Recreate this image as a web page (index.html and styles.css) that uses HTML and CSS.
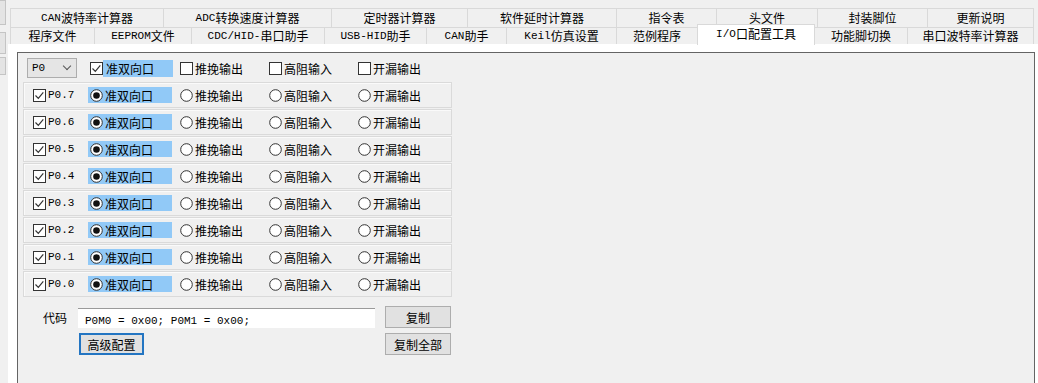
FILE: index.html
```html
<!DOCTYPE html>
<html lang="zh-CN">
<head>
    <meta charset="UTF-8">
    <title>I/O口配置工具</title>
    <link rel="stylesheet" href="styles.css">
</head>
<body>
    <div class="app">
        <div class="side">
            <div class="stub s1"></div>
            <div class="stub s2"></div>
            <div class="stub s3"></div>
        </div>

        <div class="main">
            <div class="tabs">
                <div class="tab-row row1">
                    <div class="tab"><span class="lat">CAN</span>波特率计算器</div>
                    <div class="tab"><span class="lat">ADC</span>转换速度计算器</div>
                    <div class="tab">定时器计算器</div>
                    <div class="tab">软件延时计算器</div>
                    <div class="tab">指令表</div>
                    <div class="tab">头文件</div>
                    <div class="tab">封装脚位</div>
                    <div class="tab">更新说明</div>
                </div>
                <div class="tab-row row2">
                    <div class="tab">程序文件</div>
                    <div class="tab"><span class="lat">EEPROM</span>文件</div>
                    <div class="tab"><span class="lat">CDC/HID-</span>串口助手</div>
                    <div class="tab"><span class="lat">USB-HID</span>助手</div>
                    <div class="tab"><span class="lat">CAN</span>助手</div>
                    <div class="tab"><span class="lat">Keil</span>仿真设置</div>
                    <div class="tab">范例程序</div>
                    <div class="tab active"><span class="lat">I/O</span>口配置工具</div>
                    <div class="tab">功能脚切换</div>
                    <div class="tab">串口波特率计算器</div>
                </div>
            </div>

            <div class="page">
                <div class="panel">
                    <div class="head-row">
                        <div class="combo"><span class="lat">P0</span><span class="chev"></span></div>
                        <div class="opt first">
                            <svg class="box" width="13" height="13"><rect x="0.5" y="0.5" width="12" height="12" fill="#fff" stroke="#333"/><path d="M2.5 6.5l2.8 2.8 5-6" fill="none" stroke="#333" stroke-width="1.2"/></svg>
                            <span class="hl">准双向口</span>
                        </div>
                        <div class="opt"><svg class="box" width="13" height="13"><rect x="0.5" y="0.5" width="12" height="12" fill="#fff" stroke="#333"/></svg>推挽输出</div>
                        <div class="opt"><svg class="box" width="13" height="13"><rect x="0.5" y="0.5" width="12" height="12" fill="#fff" stroke="#333"/></svg>高阻输入</div>
                        <div class="opt"><svg class="box" width="13" height="13"><rect x="0.5" y="0.5" width="12" height="12" fill="#fff" stroke="#333"/></svg>开漏输出</div>
                    </div>

                    <div class="pins" id="pins"></div>

                    <div class="code-row">
                        <span class="code-label">代码</span>
                        <div class="code-box"><span class="lat">P0M0 = 0x00; P0M1 = 0x00;</span></div>
                        <button class="btn">复制</button>
                    </div>
                    <div class="btn-row">
                        <button class="btn default">高级配置</button>
                        <button class="btn right">复制全部</button>
                    </div>
                </div>
            </div>
        </div>
    </div>

    <script>
        const boxOn = '<svg width="13" height="13"><rect x="0.5" y="0.5" width="12" height="12" fill="#fff" stroke="#333"/><path d="M2.5 6.5l2.8 2.8 5-6" fill="none" stroke="#333" stroke-width="1.2"/></svg>';
        const radioOn = '<svg width="13" height="13"><circle cx="6.5" cy="6.5" r="5.8" fill="#fff" stroke="#333"/><circle cx="6.5" cy="6.5" r="3.3" fill="#111"/></svg>';
        const radioOff = '<svg width="13" height="13"><circle cx="6.5" cy="6.5" r="5.8" fill="#fff" stroke="#333"/></svg>';

        const pins = document.getElementById('pins');
        for (let i = 7; i >= 0; i--) {
            const row = document.createElement('div');
            row.className = 'pin-row';
            row.innerHTML = `
                <div class="pin-name">${boxOn}<span class="lat">P0.${i}</span></div>
                <div class="opt sel">${radioOn}<span>准双向口</span></div>
                <div class="opt">${radioOff}推挽输出</div>
                <div class="opt">${radioOff}高阻输入</div>
                <div class="opt">${radioOff}开漏输出</div>
            `;
            pins.appendChild(row);
        }
    </script>
</body>
</html>
```

FILE: styles.css
```css
* {
    margin: 0;
    padding: 0;
    box-sizing: border-box;
}

body {
    width: 1038px;
    height: 383px;
    overflow: hidden;
    background: #f0f0f0;
    font-family: "Noto Sans CJK SC", sans-serif;
    font-size: 12px;
    color: #000;
}

.lat {
    font-family: "Liberation Mono", monospace;
    font-size: 11px;
}

.app {
    display: flex;
    height: 383px;
}

/* left edge of a neighbouring window */
.side {
    width: 8px;
    display: flex;
    flex-direction: column;
}

.stub {
    width: 8px;
    margin-left: -2px;
    background: #e4e4e4;
    border: 1px solid #c4c4c4;
}

.s1 { height: 25px; }
.s2 { height: 22px; margin-top: 7px; }
.s3 { height: 18px; margin-top: 3px; }

.main {
    flex: 1;
    display: flex;
    flex-direction: column;
}

/* tabs */
.tabs {
    padding-top: 8px;
    margin-left: 2px;
    width: 1026px;
}

.tab-row {
    display: flex;
}

.tab {
    display: flex;
    align-items: center;
    justify-content: center;
    background: #f0f0f0;
    border-top: 1px solid #d9d9d9;
    border-right: 1px solid #d9d9d9;
    white-space: nowrap;
    line-height: 1;
}

.tab:first-child {
    border-left: 1px solid #d9d9d9;
}

.row1 .tab { height: 19px; }
.row2 .tab { height: 17px; }

.row1 .tab:nth-child(1) { width: 154px; }
.row1 .tab:nth-child(2) { width: 168px; }
.row1 .tab:nth-child(3) { width: 136px; }
.row1 .tab:nth-child(4) { width: 149px; }
.row1 .tab:nth-child(5) { width: 100px; }
.row1 .tab:nth-child(6) { width: 101px; }
.row1 .tab:nth-child(7) { width: 110px; }
.row1 .tab:nth-child(8) { width: 106px; }

.row2 .tab:nth-child(1) { width: 85px; }
.row2 .tab:nth-child(2) { width: 97px; }
.row2 .tab:nth-child(3) { width: 133px; }
.row2 .tab:nth-child(4) { width: 102px; }
.row2 .tab:nth-child(5) { width: 80px; }
.row2 .tab:nth-child(6) { width: 110px; }
.row2 .tab:nth-child(7) { width: 81px; }
.row2 .tab:nth-child(8) { width: 117px; }
.row2 .tab:nth-child(9) { width: 93px; }
.row2 .tab:nth-child(10) { width: 126px; }

.row2 .tab.active {
    height: 21px;
    margin-top: -3px;
    margin-bottom: -1px;
    background: #fff;
    border-left: 1px solid #d9d9d9;
    margin-left: -1px;
    width: 118px;
    position: relative;
    z-index: 1;
    padding-bottom: 2px;
}

/* page */
.page {
    flex: 1;
    background: #fff;
    padding: 8px 3px 0 9px;
    display: flex;
}

.panel {
    flex: 1;
    background: #f0f0f0;
    border: 1px solid #646464;
    border-bottom: none;
    padding: 5px 0 0 5px;
}

.head-row {
    display: flex;
    align-items: center;
    height: 20px;
    margin-left: 4px;
}

.combo {
    width: 50px;
    height: 20px;
    background: #e5e5e5;
    border: 1px solid #adadad;
    display: flex;
    align-items: center;
    justify-content: space-between;
    padding: 0 6px 0 4px;
}

.chev {
    width: 6px;
    height: 6px;
    border-right: 1px solid #555;
    border-bottom: 1px solid #555;
    transform: rotate(45deg);
    margin-top: -4px;
}

.opt {
    display: flex;
    align-items: center;
    gap: 2px;
    width: 89px;
    white-space: nowrap;
}

.head-row .opt.first {
    width: 90px;
    margin-left: 13px;
    gap: 0;
}

.head-row .opt.first .hl {
    background: #91c9f7;
    width: 70px;
    height: 17px;
    display: flex;
    align-items: center;
    padding-left: 3px;
}

/* pin rows */
.pins {
    margin-top: 4px;
    display: flex;
    flex-direction: column;
    gap: 1px;
}

.pin-row {
    width: 429px;
    height: 26px;
    border: 1px solid #dadada;
    box-shadow: inset 1px 1px 0 #fafafa;
    display: flex;
    align-items: center;
    padding-left: 9px;
}

.pin-name {
    width: 55px;
    display: flex;
    align-items: center;
    gap: 2px;
}

.pin-row .opt.sel {
    width: 84px;
    height: 16px;
    background: #91c9f7;
    padding-left: 2px;
    margin-right: 8px;
}

.opt svg {
    flex-shrink: 0;
}

/* code area */
.code-row {
    display: flex;
    align-items: flex-end;
    margin-top: 9px;
    height: 22px;
}

.code-label {
    margin-left: 20px;
    width: 35px;
    height: 20px;
    line-height: 20px;
}

.code-box {
    width: 297px;
    height: 20px;
    background: #fff;
    border-top: 1px solid #9a9a9a;
    padding-left: 7px;
    line-height: 19px;
}

.btn {
    width: 66px;
    height: 22px;
    margin-left: 10px;
    background: #e1e1e1;
    border: 1px solid #adadad;
    font-family: "Noto Sans CJK SC", sans-serif;
    font-size: 12px;
    color: #000;
    align-self: flex-start;
}

.btn-row {
    display: flex;
    margin-top: 5px;
}

.btn.default {
    margin-left: 56px;
    width: 65px;
    border: 2px solid #2375c2;
}

.btn.right {
    margin-left: 241px;
}
```
